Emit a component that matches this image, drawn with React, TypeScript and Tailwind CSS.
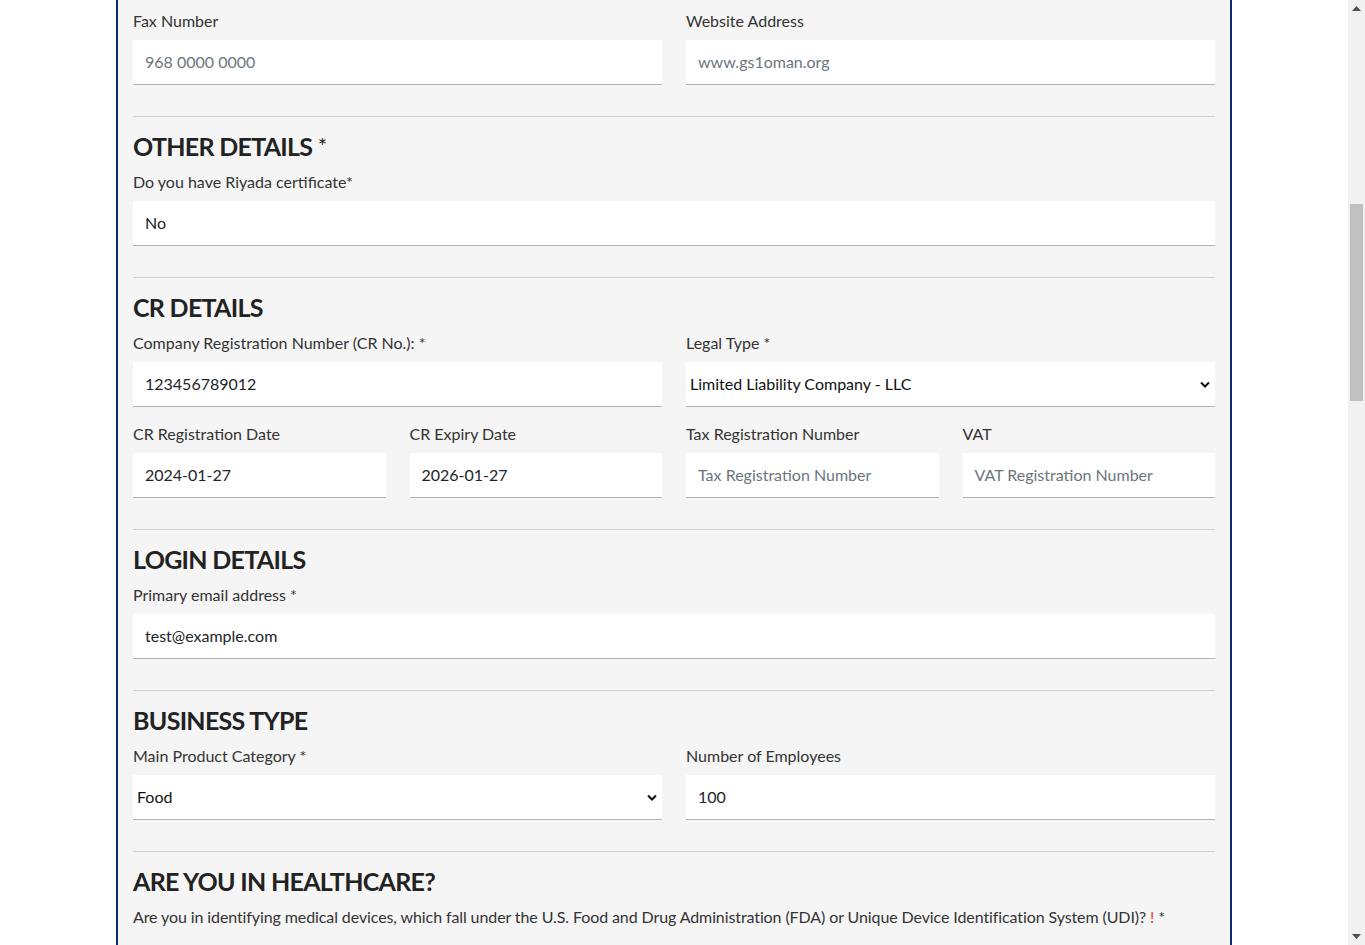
import React from 'react'

const font = { fontFamily: 'Lato, "Open Sans", sans-serif' }

const Label = ({ children, className = '' }: { children: React.ReactNode; className?: string }) => (
  <div className={`text-[16px] leading-[22px] text-[#333] mb-2 ${className}`}>{children}</div>
)

const Input = ({ value, placeholder }: { value?: string; placeholder?: string }) => (
  <div className="h-[45px] bg-white border-b border-[#b3b3b3] flex items-center px-3 text-[16px]">
    {value ? (
      <span className="text-[#212529]">{value}</span>
    ) : (
      <span className="text-[#6c757d]">{placeholder}</span>
    )}
  </div>
)

const Select = ({ value }: { value: string }) => (
  <div className="h-[45px] bg-white border-b border-[#b3b3b3] flex items-center justify-between pl-1 pr-[5px] text-[16px] text-[#111]">
    <span>{value}</span>
    <svg width="10" height="7" viewBox="0 0 10 7">
      <path d="M1 1.5 L5 5.5 L9 1.5" fill="none" stroke="#111" strokeWidth="2" />
    </svg>
  </div>
)

const Field = ({ label, children }: { label: React.ReactNode; children: React.ReactNode }) => (
  <div className="flex flex-col">
    <Label>{label}</Label>
    {children}
  </div>
)

const Section = ({ title, children }: { title: React.ReactNode; children: React.ReactNode }) => (
  <div className="mt-[31px] border-t border-[#cfcfcf]">
    <h2 className="mt-[12px] mb-[8px] text-[25px] leading-[34px] font-bold text-[#222] tracking-[-0.7px]">{title}</h2>
    {children}
  </div>
)

export default function App() {
  return (
    <div className="h-[945px] w-full flex overflow-hidden bg-white" style={font}>
      <div className="flex-1 flex justify-center">
        <div className="w-[1116px] h-full bg-[#f5f5f5] border-x-2 border-[#0b2c6b] px-[15px] pt-[10px]">
          {/* contact */}
          <div className="grid grid-cols-2 gap-x-6">
            <Field label="Fax Number">
              <Input placeholder="968 0000 0000" />
            </Field>
            <Field label="Website Address">
              <Input placeholder="www.gs1oman.org" />
            </Field>
          </div>

          <Section title={<>OTHER DETAILS <span className="font-normal text-[22px] align-top">*</span></>}>
            <Field label="Do you have Riyada certificate*">
              <Input value="No" />
            </Field>
          </Section>

          <Section title="CR DETAILS">
            <div className="grid grid-cols-2 gap-x-6">
              <Field label="Company Registration Number (CR No.): *">
                <Input value="123456789012" />
              </Field>
              <Field label="Legal Type *">
                <Select value="Limited Liability Company - LLC" />
              </Field>
            </div>
            <div className="grid grid-cols-4 gap-x-6 mt-4">
              <Field label="CR Registration Date">
                <Input value="2024-01-27" />
              </Field>
              <Field label="CR Expiry Date">
                <Input value="2026-01-27" />
              </Field>
              <Field label="Tax Registration Number">
                <Input placeholder="Tax Registration Number" />
              </Field>
              <Field label="VAT">
                <Input placeholder="VAT Registration Number" />
              </Field>
            </div>
          </Section>

          <Section title="LOGIN DETAILS">
            <Field label="Primary email address *">
              <Input value="test@example.com" />
            </Field>
          </Section>

          <Section title="BUSINESS TYPE">
            <div className="grid grid-cols-2 gap-x-6">
              <Field label="Main Product Category *">
                <Select value="Food" />
              </Field>
              <Field label="Number of Employees">
                <Input value="100" />
              </Field>
            </div>
          </Section>

          <Section title="ARE YOU IN HEALTHCARE?">
            <Label className="tracking-[-0.1px]">
              Are you in identifying medical devices, which fall under the U.S. Food and Drug Administration (FDA) or Unique
              Device Identification System (UDI)? <span className="text-[#e53935]">!</span> *
            </Label>
          </Section>
        </div>
      </div>

      {/* scrollbar */}
      <div className="w-[17px] h-full bg-[#f1f1f1] flex flex-col items-center">
        <div className="h-[17px] flex items-center justify-center">
          <svg width="9" height="5" viewBox="0 0 9 5">
            <path d="M0 5 L4.5 0 L9 5 Z" fill="#505050" />
          </svg>
        </div>
        <div className="w-[13px] h-[197px] bg-[#c1c1c1] mt-[187px]" />
        <div className="flex-1" />
        <div className="h-[17px] flex items-center justify-center">
          <svg width="9" height="5" viewBox="0 0 9 5">
            <path d="M0 0 L9 0 L4.5 5 Z" fill="#505050" />
          </svg>
        </div>
      </div>
    </div>
  )
}
